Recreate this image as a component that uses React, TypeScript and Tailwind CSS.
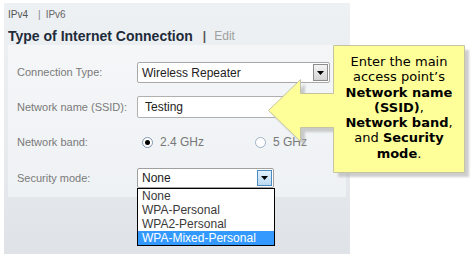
import React from "react";

const Tri = () => (
  <svg width="7" height="4" viewBox="0 0 7 4"><path d="M0 0H7L3.5 4Z" fill="#000" /></svg>
);

export default function App() {
  return (
    <div className="relative w-[475px] h-[259px] bg-white overflow-hidden pt-[3px] pl-[4px]" style={{ fontFamily: '"Liberation Sans", Arial, sans-serif' }}>
      <div className="w-[346px] h-[251px] bg-gradient-to-b from-[#eef1f4] via-[#e9ecef] to-[#dfe3e7] flex flex-col">
        <div className="flex items-center pl-[4px] pt-[6px] h-[18px] text-[10px] leading-[12px] text-[#555]">
          <span>IPv4</span>
          <span className="ml-[10px] mr-[5px] text-[#888]">|</span>
          <span className="text-[#666]">IPv6</span>
        </div>
        <div className="flex items-center pl-[4px] mt-[7px] h-[16px]">
          <span className="text-[14px] font-bold text-[#1e2b3a] leading-[16px]">Type of Internet Connection</span>
          <span className="ml-[10px] text-[12px] font-bold text-[#555]">|</span>
          <span className="ml-[8px] text-[12px] text-[#a0a0a0]">Edit</span>
        </div>
        <div className="mx-[4px] mt-[1px] h-[152px] bg-gradient-to-b from-[#f4f6f8] to-[#eff2f4] pl-[9px] text-[11px] text-[#7a7a7a]">
          <div className="flex items-center mt-[17px] h-[21px]">
            <div className="w-[120px]">Connection Type:</div>
            <div className="relative w-[193px] h-[21px] bg-white border border-[#a8a8a8] rounded-[2px] flex items-center pl-[4px] text-[12px] text-[#222]">
              Wireless Repeater
              <div className="absolute right-[1px] top-[1px] w-[15px] h-[17px] bg-gradient-to-b from-[#f4f4f4] to-[#d4d4d4] border border-[#8c8c8c] flex items-center justify-center">
                <Tri />
              </div>
            </div>
          </div>
          <div className="flex items-center mt-[13px] h-[22px]">
            <div className="w-[120px]">Network name (SSID):</div>
            <div className="w-[193px] h-[22px] bg-white border border-[#b0b0b0] rounded-[2px] flex items-center pl-[7px] text-[12px] text-[#222]">
              Testing
            </div>
          </div>
          <div className="flex items-center mt-[14px] h-[20px]">
            <div className="w-[120px]">Network band:</div>
            <div className="flex items-center w-[118px] pl-[5px] text-[12px] text-[#777]">
              <div className="w-[11px] h-[11px] rounded-full border border-[#7f96ad] bg-white flex items-center justify-center">
                <div className="w-[5px] h-[5px] rounded-full bg-black" />
              </div>
              <span className="ml-[7px]">2.4 GHz</span>
            </div>
            <div className="flex items-center text-[12px] text-[#777]">
              <div className="w-[11px] h-[11px] rounded-full border border-[#9db1c4] bg-white" />
              <span className="ml-[7px]">5 GHz</span>
            </div>
          </div>
          <div className="flex items-center mt-[16px] h-[20px]">
            <div className="w-[120px]">Security mode:</div>
            <div className="relative w-[137px] h-[20px] bg-white border border-[#a0a0a0] rounded-[2px] flex items-center pl-[4px] text-[12px] text-[#222]">
              None
              <div className="absolute right-[1px] top-[1px] w-[15px] h-[16px] bg-gradient-to-b from-[#e3f0fb] to-[#bcdaf3] border border-[#4a8bc4] flex items-center justify-center">
                <Tri />
              </div>
              <div className="absolute left-[-1px] top-[19px] w-[138px] border border-black bg-white text-[12px] text-[#3a3a3a] leading-[14px] z-10">
                <div className="h-[14px] pl-[4px]">None</div>
                <div className="h-[14px] pl-[4px]">WPA-Personal</div>
                <div className="h-[14px] pl-[4px]">WPA2-Personal</div>
                <div className="h-[14px] pl-[4px] bg-[#3399ff] text-white">WPA-Mixed-Personal</div>
              </div>
            </div>
          </div>
        </div>
      </div>

      <svg className="absolute left-0 top-0" width="475" height="259" viewBox="0 0 475 259">
        <defs>
          <filter id="blur" x="-10%" y="-10%" width="120%" height="120%">
            <feGaussianBlur stdDeviation="1.2" />
          </filter>
        </defs>
        <path
          d="M268 110 L300 79 L300 93 L333 93 L333 45 L464 45 L464 172 L333 172 L333 127 L300 127 L300 141 Z"
          transform="translate(5 5)"
          fill="#b4b4b4"
          opacity="0.65"
          filter="url(#blur)"
        />
        <path
          d="M268.5 110.5 L300.5 79.5 L300.5 93.5 L333.5 93.5 L333.5 45.5 L464.5 45.5 L464.5 172.5 L333.5 172.5 L333.5 127.5 L300.5 127.5 L300.5 141.5 Z"
          fill="#ffff99"
          stroke="#c4c4a4"
          strokeWidth="1"
        />
      </svg>
      <div
        className="absolute left-[334px] top-[54px] w-[130px] text-center text-[13px] leading-[15.3px] text-black"
        style={{ fontFamily: '"DejaVu Sans", Verdana, sans-serif' }}
      >
        Enter the main
        <br />
        access point’s
        <br />
        <b>Network name</b>
        <br />
        <b>(SSID)</b>,
        <br />
        <b>Network band</b>,
        <br />
        and <b>Security</b>
        <br />
        <b>mode</b>.
      </div>
    </div>
  );
}
